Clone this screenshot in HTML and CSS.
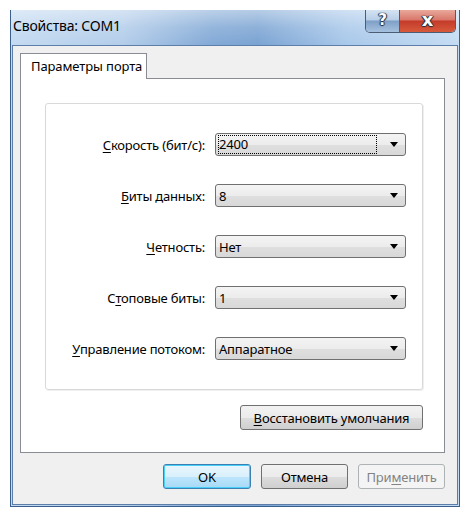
FILE: index.html
```html
<!DOCTYPE html>
<html lang="ru">
<head>
    <meta charset="UTF-8">
    <title>Свойства: COM1</title>
    <link rel="stylesheet" href="styles.css">
</head>
<body>

<div class="window">
    <!-- заголовок окна -->
    <div class="titlebar">
        <div class="title">Свойства: COM1</div>
        <div class="caption-buttons">
            <div class="cap-btn help">?</div>
            <div class="cap-btn close">x</div>
        </div>
    </div>

    <div class="client">
        <div class="tabs">
            <div class="tab active">Параметры порта</div>
        </div>

        <div class="tab-panel">
            <div class="group">
                <label class="field-label"><u>С</u>корость (бит/с):</label>
                <div class="combo focused"><span class="combo-text">2400</span><span class="arrow"></span></div>

                <label class="field-label"><u>Б</u>иты данных:</label>
                <div class="combo"><span class="combo-text">8</span><span class="arrow"></span></div>

                <label class="field-label"><u>Ч</u>етность:</label>
                <div class="combo"><span class="combo-text">Нет</span><span class="arrow"></span></div>

                <label class="field-label">С<u>т</u>оповые биты:</label>
                <div class="combo"><span class="combo-text">1</span><span class="arrow"></span></div>

                <label class="field-label"><u>У</u>правление потоком:</label>
                <div class="combo"><span class="combo-text">Аппаратное</span><span class="arrow"></span></div>
            </div>

            <div class="restore-row">
                <button class="btn restore"><u>В</u>осстановить умолчания</button>
            </div>
        </div>

        <!-- кнопки диалога -->
        <div class="dialog-buttons">
            <button class="btn default">OK</button>
            <button class="btn">Отмена</button>
            <button class="btn disabled">При<u>м</u>енить</button>
        </div>
    </div>
</div>

</body>
</html>
```

FILE: styles.css
```css
body {
    margin: 0;
    background-color: #ffffff;
    font-family: "Noto Sans", "Open Sans", sans-serif;
    font-size: 13px;
    color: #000;
}

/* окно */
.window {
    width: 448px;
    margin: 10px 0 0 10px;
    border: 1px solid #3a5f8c;
    border-top: none;
    background: linear-gradient(90deg, #c3daf1 0%, #b3cdea 25%, #82a9d6 45%, #7aa3d2 55%, #a9c8ea 75%, #c4dcf3 100%);
}

.titlebar {
    display: flex;
    height: 35px;
    padding-left: 2px;
    background: linear-gradient(180deg, rgba(255,255,255,0.45) 0%, rgba(255,255,255,0.15) 50%, rgba(255,255,255,0) 100%);
}

.title {
    padding-top: 6px;
    font-size: 14px;
    letter-spacing: -0.2px;
}

.caption-buttons {
    display: flex;
    margin-left: auto;
    margin-right: 3px;
    height: 22px;
    border: 1px solid #4a5d75;
    border-top: none;
    border-radius: 0 0 5px 5px;
    overflow: hidden;
}

.cap-btn {
    height: 22px;
    font-family: "DejaVu Sans", sans-serif;
    font-weight: bold;
    color: #fff;
    text-align: center;
    line-height: 20px;
    text-shadow: 0 0 1px #1e2c40, 1px 0 1px #1e2c40, -1px 0 1px #1e2c40, 0 1px 1px #1e2c40;
}

.help {
    width: 33px;
    font-size: 15px;
    border-right: 1px solid #4a5d75;
    background: linear-gradient(180deg, #d4e3f2 0%, #b8cfe7 45%, #7f9fc6 50%, #a6c1df 100%);
}

.close {
    width: 55px;
    font-size: 18px;
    background: linear-gradient(180deg, #e9a99c 0%, #d9776a 45%, #c33b2a 50%, #d85a3c 100%);
}

/* клиентская область */
.client {
    background-color: #f0f0f0;
    border: 1px solid #5d7ea8;
    margin: 0 1px 1px 1px;
    height: 451px;
    padding: 7px 12px 0 7px;
}

.tabs {
    display: flex;
}

.tab {
    box-sizing: border-box;
    width: 127px;
    height: 26px;
    line-height: 25px;
    padding: 0 0 0 10px;
    white-space: nowrap;
    background-color: #ffffff;
    border: 1px solid #898c95;
    border-bottom: none;
    margin-bottom: -1px;
    position: relative;
    z-index: 1;
    letter-spacing: -0.1px;
}

.tab-panel {
    height: 349px;
    background-color: #ffffff;
    border: 1px solid #898c95;
    padding: 24px 21px 0 24px;
}

.group {
    display: grid;
    grid-template-columns: 159px 191px;
    grid-auto-rows: 23px;
    column-gap: 10px;
    row-gap: 28px;
    align-items: center;
    height: 227px;
    padding: 29px 0 29px 0;
    border: 1px solid #d9d9d9;
    border-radius: 3px;
    box-shadow: 1px 1px 0 #efefef;
}

.field-label {
    text-align: right;
    letter-spacing: -0.2px;
}

.field-label u,
.btn u {
    text-decoration-thickness: 1px;
    text-underline-offset: 2px;
}

/* выпадающий список */
.combo {
    height: 21px;
    border: 1px solid #707070;
    border-radius: 3px;
    background: linear-gradient(180deg, #f4f4f4 0%, #ececec 50%, #dfdfdf 51%, #d8d8d8 100%);
    display: flex;
    align-items: center;
    padding: 0 7px 0 3px;
}

.combo-text {
    flex: 1;
    letter-spacing: -0.2px;
}

.combo.focused .combo-text {
    height: 17px;
    line-height: 17px;
    margin-right: 14px;
    outline: 1px dotted #000;
    outline-offset: 0;
}

.arrow {
    width: 0;
    height: 0;
    border-left: 4px solid transparent;
    border-right: 4px solid transparent;
    border-top: 5px solid #000;
}

/* кнопки */
.restore-row {
    display: flex;
    justify-content: flex-end;
    margin-top: 15px;
}

.btn {
    font-family: inherit;
    font-size: 13px;
    height: 25px;
    border: 1px solid #707070;
    border-radius: 3px;
    background: linear-gradient(180deg, #f2f2f2 0%, #ebebeb 50%, #dddddd 51%, #cfcfcf 100%);
    color: #000;
    padding: 0;
    letter-spacing: -0.2px;
}

.restore {
    width: 183px;
}

.dialog-buttons {
    display: flex;
    justify-content: flex-end;
    gap: 10px;
    margin-top: 11px;
}

.dialog-buttons .btn {
    width: 87px;
}

.btn.default {
    width: 88px;
    border-color: #3c7fb1;
    box-shadow: 0 0 0 1px #48d0f8 inset;
    background: linear-gradient(180deg, #eaf6fd 0%, #d9f0fc 50%, #bee6fd 51%, #a7d9f5 100%);
}

.btn.disabled {
    border-color: #adb2b5;
    background: #f4f4f4;
    color: #838383;
}
```
